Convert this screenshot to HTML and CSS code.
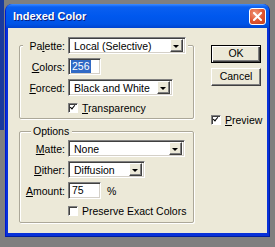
FILE: index.html
```html
<!DOCTYPE html>
<html lang="en">
<head>
    <meta charset="UTF-8">
    <title>Indexed Color</title>
    <link rel="stylesheet" href="styles.css">
</head>
<body>
    <div class="window">
        <div class="titlebar">
            <span class="title">Indexed Color</span>
            <span class="close">
                <svg width="9" height="9" viewBox="0 0 9 9"><path d="M1 1 L8 8 M8 1 L1 8" stroke="#fff" stroke-width="2" stroke-linecap="square"/></svg>
            </span>
        </div>
        <div class="client">
            <div class="left">
                <fieldset class="group group-palette">
                    <legend>
                        <div class="row">
                            <label class="lbl">Pa<u>l</u>ette:</label>
                            <div class="select w-palette"><span class="value">Local (Selective)</span><span class="arrow"></span></div>
                        </div>
                    </legend>
                    <div class="row row-gap">
                        <label class="lbl"><u>C</u>olors:</label>
                        <div class="field"><span class="sel">256</span></div>
                    </div>
                    <div class="row row-gap">
                        <label class="lbl"><u>F</u>orced:</label>
                        <div class="select w-forced"><span class="value">Black and White</span><span class="arrow"></span></div>
                    </div>
                    <div class="row row-check">
                        <span class="lbl"></span>
                        <span class="check on"></span>
                        <span class="check-text"><u>T</u>ransparency</span>
                    </div>
                </fieldset>

                <fieldset class="group group-options">
                    <legend>Options</legend>
                    <div class="row row-first">
                        <label class="lbl"><u>M</u>atte:</label>
                        <div class="select w-matte"><span class="value">None</span><span class="arrow"></span></div>
                    </div>
                    <div class="row row-gap">
                        <label class="lbl"><u>D</u>ither:</label>
                        <div class="select w-dither"><span class="value">Diffusion</span><span class="arrow"></span></div>
                    </div>
                    <div class="row row-gap">
                        <label class="lbl"><u>A</u>mount:</label>
                        <div class="field"><span>75</span></div>
                        <span class="unit">%</span>
                    </div>
                    <div class="row row-check">
                        <span class="lbl"></span>
                        <span class="check"></span>
                        <span class="check-text">Preserve Exact Colors</span>
                    </div>
                </fieldset>
            </div>

            <div class="right">
                <div class="btn btn-default">OK</div>
                <div class="btn">Cancel</div>
                <div class="preview">
                    <span class="check on"></span>
                    <span class="check-text"><u>P</u>review</span>
                </div>
            </div>
        </div>
    </div>
</body>
</html>
```

FILE: styles.css
```css
body {
    margin: 0;
    padding: 4px 5px 0 5px;
    width: 275px;
    height: 247px;
    box-sizing: border-box;
    overflow: hidden;
    background: linear-gradient(#1b3b9c, #1b3b9c) no-repeat 0 0 / 4px 130px, #7f7f7f;
    font-family: "Liberation Sans", Arial, sans-serif;
    font-size: 10.5px;
    color: #000;
}
.window {
    width: 265px;
    height: 233px;
    box-sizing: border-box;
    background: #0831d9;
    border-radius: 7px 7px 0 0;
    border-left: 1px solid #0019cf;
    border-right: 1px solid #001ea0;
    border-bottom: 1px solid #001ea0;
    display: flex;
    flex-direction: column;
}
.titlebar {
    height: 24px;
    flex: none;
    display: flex;
    align-items: center;
    justify-content: space-between;
    padding: 0 3px 0 7px;
    border-radius: 6px 6px 0 0;
    background: linear-gradient(#3d8cff 0, #0a5ff0 3px, #0058ee 12px, #0054e6 20px, #0043cf 24px);
    color: #fff;
}
.title {
    font-weight: bold;
    font-size: 11px;
    text-shadow: 1px 1px #0a1e80;
}
.close {
    width: 17px;
    height: 17px;
    box-sizing: border-box;
    border: 1px solid #fff;
    border-radius: 3px;
    background: radial-gradient(circle at 35% 30%, #f09a7c, #e0532f 55%, #c43d18);
    display: flex;
    align-items: center;
    justify-content: center;
}
.client {
    flex: 1;
    margin: 0 2px 3px 2px;
    background: #ece9d8;
    display: flex;
    padding: 9px 0 0 11px;
}
.left {
    width: 175px;
}
.group {
    margin: 0;
    padding: 0 0 4px 3px;
    border: 1px solid #aca899;
    border-radius: 2px;
    box-shadow: inset 1px 1px #fff, 1px 1px #fff;
    min-width: 0;
}
.group legend {
    padding: 0 2px 0 0;
    margin: 0;
    background: #ece9d8;
}
.group-options {
    margin-top: 6px;
    padding-bottom: 5px;
}
.group-options legend {
    padding: 0 3px 0 2px;
    margin-left: 8px;
    line-height: 13px;
}
.row {
    display: flex;
    align-items: center;
}
.row-gap {
    margin-top: 4px;
}
.row-first {
    margin-top: 2px;
}
.row-check {
    margin-top: 5px;
    height: 13px;
}
.lbl {
    width: 42px;
    flex: none;
    text-align: right;
    margin-right: 3px;
}
.select, .field {
    height: 17px;
    box-sizing: border-box;
    background: #fff;
    border: 1px solid;
    border-color: #808080 #fff #fff #808080;
    box-shadow: inset 1px 1px #404040, inset -1px -1px #d4d0c8;
    display: flex;
    align-items: center;
    padding: 2px;
}
.select .value {
    flex: 1;
    padding-left: 3px;
    white-space: nowrap;
    overflow: hidden;
}
.select .arrow {
    width: 13px;
    height: 13px;
    box-sizing: border-box;
    flex: none;
    background: #ece9d8;
    border: 1px solid;
    border-color: #fff #404040 #404040 #fff;
    box-shadow: inset -1px -1px #808080;
    display: flex;
    align-items: center;
    justify-content: center;
}
.select .arrow::after {
    content: "";
    border-left: 3px solid transparent;
    border-right: 3px solid transparent;
    border-top: 3px solid #000;
    margin: 1px 1px 0 0;
}
.w-palette { width: 118px; }
.w-forced { width: 105px; }
.w-matte { width: 117px; }
.w-dither { width: 77px; }
.field {
    width: 33px;
}
.field span {
    padding-left: 1px;
    line-height: 13px;
}
.field .sel {
    background: #316ac5;
    color: #fff;
    padding: 0 1px;
}
.unit {
    margin-left: 6px;
}
.check {
    width: 10px;
    height: 10px;
    box-sizing: border-box;
    flex: none;
    background: #fff;
    border: 1px solid;
    border-color: #808080 #fff #fff #808080;
    box-shadow: inset 1px 1px #404040;
    position: relative;
}
.check.on::after {
    content: "";
    position: absolute;
    left: 2px;
    top: 0;
    width: 2px;
    height: 4px;
    border: solid #000;
    border-width: 0 1.5px 1.5px 0;
    transform: rotate(40deg);
}
.check-text {
    margin-left: 4px;
}
.right {
    margin-left: 17px;
    width: 50px;
    padding-top: 8px;
}
.btn {
    height: 18px;
    box-sizing: border-box;
    border: 1px solid;
    border-color: #fff #404040 #404040 #fff;
    box-shadow: inset -1px -1px #808080;
    background: #ece9d8;
    text-align: center;
    line-height: 15px;
    margin-top: 5px;
}
.btn-default {
    margin-top: 0;
    border-color: #000;
    box-shadow: inset 1px 1px #fff, inset -1px -1px #404040, inset -2px -2px #808080;
}
.preview {
    display: flex;
    align-items: center;
    margin-top: 28px;
}
```
